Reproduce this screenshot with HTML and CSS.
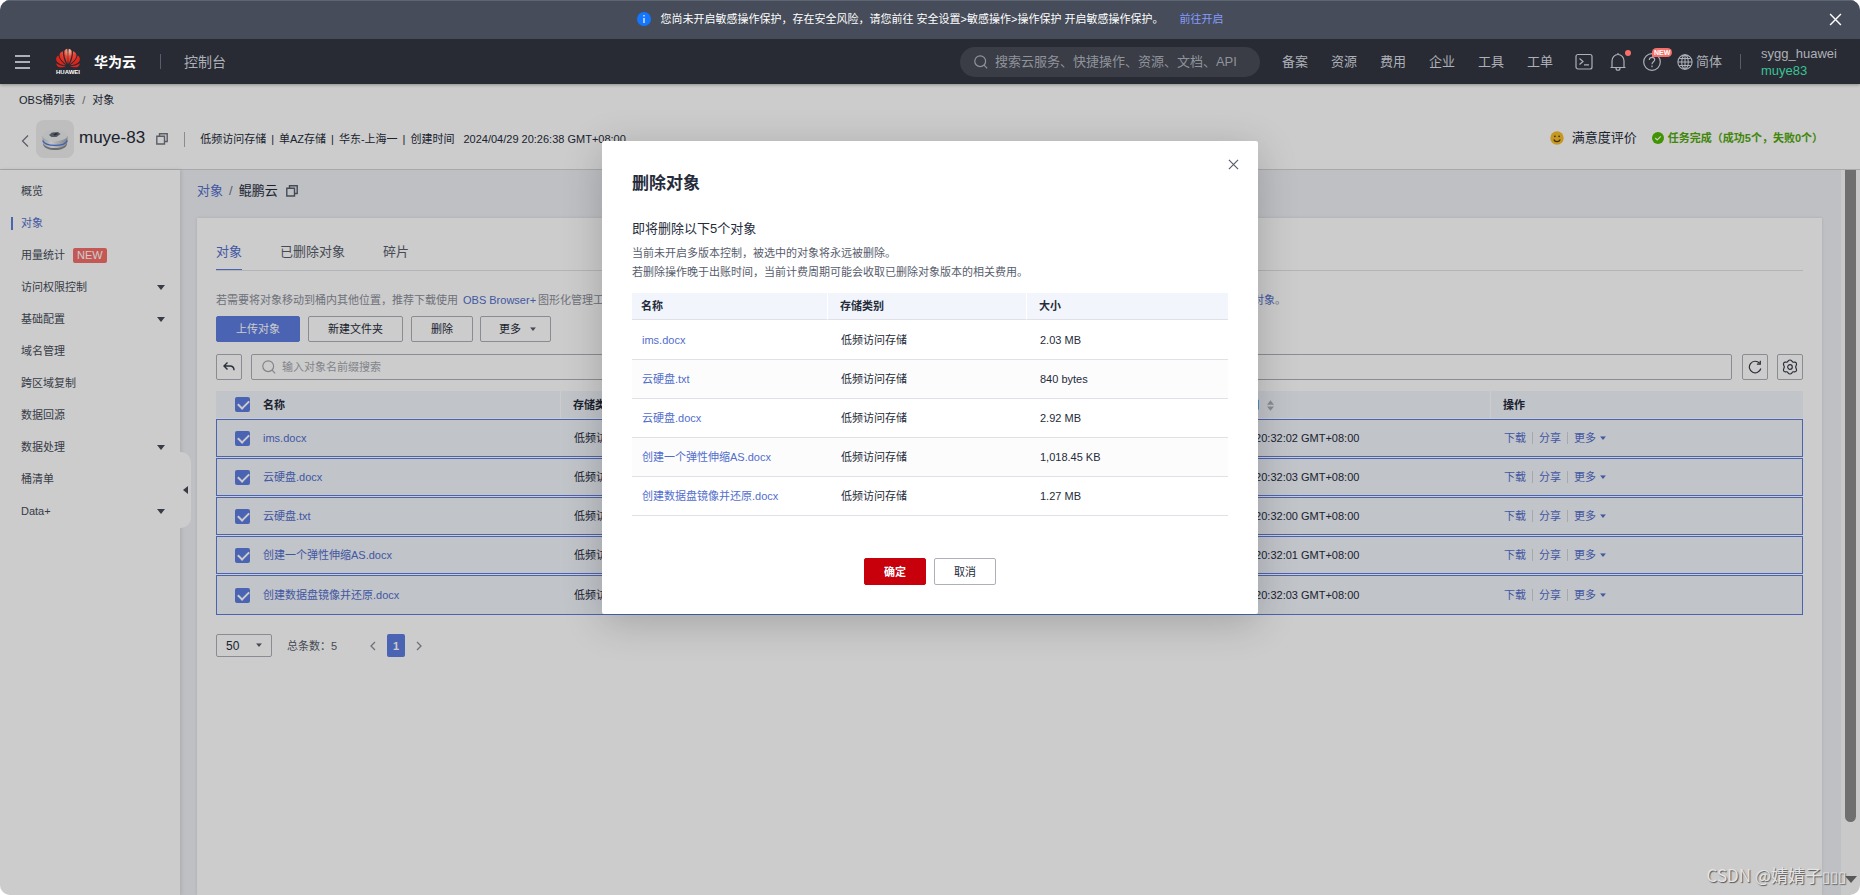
FILE: index.html
```html
<!DOCTYPE html>
<html lang="zh-CN">
<head>
<meta charset="utf-8">
<title>对象 - muye-83</title>
<link rel="stylesheet" href="styles.css">
</head>
<body>
<svg class="defs" aria-hidden="true">
  <symbol id="copy" viewBox="0 0 12 12"><path d="M3.500 3V.800h7.700v7.700H9M.800 3.300h7.700V11H.800z" fill="none" stroke="currentColor" stroke-width="1.400"/></symbol>
  <symbol id="caret" viewBox="0 0 8 5"><path d="M0 0h8L4 5z" fill="currentColor"/></symbol>
  <symbol id="cross" viewBox="0 0 12 12"><path d="M1 1l10 10M11 1L1 11" fill="none" stroke="currentColor" stroke-width="1.300"/></symbol>
  <symbol id="search" viewBox="0 0 14 14"><circle cx="6.200" cy="6.200" r="5.400" fill="none" stroke="currentColor" stroke-width="1.200"/><path d="M10 10.200l3.200 3.200" stroke="currentColor" stroke-width="1.200"/></symbol>
</svg>
<div class="app">
  <header class="top">
    <div class="notice">
      <svg class="info" viewBox="0 0 14 14"><circle cx="7" cy="7" r="7" fill="#1476ff"/><path d="M7 3v1.500M7 6v5" stroke="#fff" stroke-width="1.200"/></svg>
      <span>您尚未开启敏感操作保护，存在安全风险，请您前往 安全设置&gt;敏感操作&gt;操作保护 开启敏感操作保护。</span>
      <a href="#">前往开启</a>
      <button class="notice-close" aria-label="关闭"><svg viewBox="0 0 12 12"><use href="#cross"/></svg></button>
    </div>
    <nav class="nav">
      <button class="burger" aria-label="菜单"><i></i><i></i><i></i></button>
      <a class="brand" href="#">
        <svg class="logo" viewBox="0 0 26 27">
          <defs><radialGradient id="petal" gradientUnits="userSpaceOnUse" cx="14" cy="3" r="13"><stop offset="0" stop-color="#f9c3a6"/><stop offset=".450" stop-color="#ee4433"/><stop offset="1" stop-color="#e2231a"/></radialGradient></defs>
          <g fill="url(#petal)">
            <path d="M12.500 16C10.300 11.500 8.800 7 9.300 3.200 9.700 1.700 11 .900 12.300.800 12.800 5 12.900 11 12.500 16z"/>
            <path d="M13.500 16C15.700 11.500 17.200 7 16.700 3.200 16.300 1.700 15 .900 13.700.800 13.200 5 13.100 11 13.500 16z"/>
            <path d="M11.600 16.500C9.200 13 7.800 8.500 8 3.300 5.500 3.800 4.200 5.800 4.600 8.200 5.500 11.500 8.300 14.300 11.600 16.500z"/>
            <path d="M14.400 16.500C16.800 13 18.200 8.500 18 3.300 20.500 3.800 21.800 5.800 21.400 8.200 20.500 11.500 17.700 14.300 14.400 16.500z"/>
            <path d="M10.900 17.300C7.200 15 4.500 11.500 3.200 7.500 1 9 .500 11.600 1.900 13.500 3.800 15.900 7.500 17 10.900 17.300z"/>
            <path d="M15.100 17.300C18.800 15 21.500 11.500 22.800 7.500 25 9 25.500 11.600 24.100 13.500 22.200 15.900 18.500 17 15.100 17.300z"/>
            <path d="M10.800 18.300C7.500 18.100 3.800 17.100 1.300 15.200 1.300 17.300 2.800 19 5 19.300 7.300 19.500 9.300 19 10.800 18.300z"/>
            <path d="M15.200 18.300C18.500 18.100 22.200 17.100 24.700 15.200 24.700 17.300 23.200 19 21 19.300 18.700 19.500 16.700 19 15.200 18.300z"/>
          </g>
          <text x="13" y="26" class="logo-text" text-anchor="middle">HUAWEI</text>
        </svg>
        <b>华为云</b>
      </a>
      <span class="bar"></span>
      <a class="console" href="#">控制台</a>
      <label class="nav-search"><svg viewBox="0 0 14 14"><use href="#search"/></svg><input type="text" aria-label="搜索" placeholder="搜索云服务、快捷操作、资源、文档、API"></label>
      <div class="menu">
        <a href="#">备案</a><a href="#">资源</a><a href="#">费用</a><a href="#">企业</a><a href="#">工具</a><a href="#">工单</a>
      </div>
      <div class="tools">
        <button aria-label="终端"><svg viewBox="0 0 18 18"><rect x="1" y="1.500" width="16" height="14.500" rx="2"/><path d="M4.500 5.500l3.500 3-3.500 3M9 11.800h5"/></svg></button>
        <button aria-label="通知"><svg viewBox="0 0 18 18"><path d="M1.500 14.500h15M3 14.500V8a6 6.500 0 0 1 12 0v6.500M7 15c0 3 4 3 4 0M9 1.500V0"/></svg><span class="dot"></span></button>
        <button aria-label="帮助"><svg viewBox="0 0 18 18"><circle cx="9" cy="9" r="8.300"/><path d="M6.300 7c0-3.600 5.500-3.400 5.400-.200C11.600 8.800 9 8.800 9 11.200M9 12.600v1.600"/></svg><span class="new-pill">NEW</span></button>
        <button class="lang"><svg viewBox="0 0 18 18"><circle cx="9" cy="9" r="8"/><ellipse cx="9" cy="9" rx="3.700" ry="8"/><path d="M9 1v16M1 9h16M2.500 5h13M2.500 13h13"/></svg>简体</button>
      </div>
      <span class="bar"></span>
      <div class="user"><span>sygg_huawei</span><span class="sub">muye83</span></div>
    </nav>
  </header>

  <div class="bucket">
    <div class="crumbs"><a href="#">OBS桶列表</a><i>/</i><a href="#">对象</a></div>
    <div class="bucket-row">
      <button class="back" aria-label="返回"><svg viewBox="0 0 8 12"><path d="M7 .500L1.500 6 7 11.500"/></svg></button>
      <svg class="bucket-icon" viewBox="0 0 38 38">
        <defs><linearGradient id="side"><stop offset="0" stop-color="#c4c5c9"/><stop offset=".350" stop-color="#f4f4f6"/><stop offset="1" stop-color="#a2a4a9"/></linearGradient></defs>
        <rect width="38" height="38" rx="8" fill="#eeeeef"/>
        <path d="M7 21v3c1 8 23 8 24 0v-3z" fill="#85878d"/>
        <path d="M6.500 16v6c1 8 24 8 25 0v-6z" fill="url(#side)"/>
        <path d="M6.700 20.500c2.500 6.500 22 6.500 24.600 0" fill="none" stroke="#4a7be0" stroke-width="1.200"/>
        <ellipse cx="19" cy="15.500" rx="12.500" ry="5.800" fill="#e9eaec"/>
        <path d="M13 15l3-2.500 6-.500 2.500 2-4 3h-5z" fill="#6a707a"/><path d="M17 14.500l3-1.500 2 1-3 1.500z" fill="#333a44"/>
      </svg>
      <h1>muye-83</h1>
      <button class="copy" aria-label="复制"><svg viewBox="0 0 12 12"><use href="#copy"/></svg></button>
      <span class="split"></span>
      <p class="meta"><span>低频访问存储</span><i>|</i><span>单AZ存储</span><i>|</i><span>华东-上海一</span><i>|</i><span>创建时间</span><time>2024/04/29 20:26:38 GMT+08:00</time></p>
      <a class="rate" href="#"><svg viewBox="0 0 14 14"><circle cx="7" cy="7" r="6.700" fill="#f5bf2a"/><path d="M3.800 8.500c1 2.800 5.400 2.800 6.400 0" fill="none" stroke="#5b3a10" stroke-width="1.200"/><circle cx="4.900" cy="5.300" r=".900" fill="#5b3a10"/><circle cx="9.100" cy="5.300" r=".900" fill="#5b3a10"/></svg>满意度评价</a>
      <span class="task"><svg viewBox="0 0 12 12"><circle cx="6" cy="6" r="6" fill="#50b900"/><path d="M3.200 6l2 2 3.600-3.700" fill="none" stroke="#fff" stroke-width="1.200"/></svg>任务完成（成功5个，失败0个）</span>
    </div>
  </div>

  <div class="body">
    <aside class="side">
      <a href="#">概览</a>
      <a href="#" class="on">对象</a>
      <a href="#">用量统计<em>NEW</em></a>
      <a href="#">访问权限控制<svg viewBox="0 0 8 5"><use href="#caret"/></svg></a>
      <a href="#">基础配置<svg viewBox="0 0 8 5"><use href="#caret"/></svg></a>
      <a href="#">域名管理</a>
      <a href="#">跨区域复制</a>
      <a href="#">数据回源</a>
      <a href="#">数据处理<svg viewBox="0 0 8 5"><use href="#caret"/></svg></a>
      <a href="#">桶清单</a>
      <a href="#">Data+<svg viewBox="0 0 8 5"><use href="#caret"/></svg></a>
      <button class="fold" aria-label="收起"><svg viewBox="0 0 5 8"><path d="M5 0v8L0 4z"/></svg></button>
    </aside>
    <main class="main">
      <div class="path"><a href="#">对象</a><i>/</i><span>鲲鹏云</span><button class="copy" aria-label="复制"><svg viewBox="0 0 12 12"><use href="#copy"/></svg></button></div>
      <section class="card">
        <div class="tabs"><a href="#" class="on">对象</a><a href="#">已删除对象</a><a href="#">碎片</a></div>
        <p class="hint">若需要将对象移动到桶内其他位置，推荐下载使用<a href="#">OBS Browser+</a>图形化管理工具，支持创建文件夹、批量上传、下载、移动、复制及重命名等操作。如需了解更多使用方法和限制说明，请参见帮助中心的<a href="#">如何移动对象</a>。</p>
        <div class="actions">
          <button class="btn primary">上传对象</button>
          <button class="btn wide">新建文件夹</button>
          <button class="btn">删除</button>
          <button class="btn more">更多<svg viewBox="0 0 8 5"><use href="#caret"/></svg></button>
        </div>
        <div class="filter">
          <button class="sq" aria-label="上一级"><svg viewBox="0 0 14 14"><path d="M5.500 2.500L2 6l3.500 3.500M2 6h6c2.800 0 4 1.200 4 4.200"/></svg></button>
          <label class="find"><svg viewBox="0 0 14 14"><use href="#search"/></svg><input type="text" aria-label="搜索对象" placeholder="输入对象名前缀搜索"></label>
          <button class="sq" aria-label="刷新"><svg viewBox="0 0 14 14"><path d="M11.500 3.200A5.800 5.800 0 1 0 12.800 8.500M12.300.800v3.400H8.900" stroke-width="1.200"/></svg></button>
          <button class="sq last" aria-label="设置"><svg viewBox="0 0 16 16"><path d="M8 1c1.700 0 1.900 1.800 3 2.200 1.200.300 2.300-.800 3.300.800s-.600 2.500-.600 4 1.600 2.400.600 4-2.100.500-3.300.800C9.900 13.200 9.700 15 8 15s-1.900-1.800-3-2.200c-1.200-.300-2.300.800-3.300-.800s.600-2.500.600-4-1.600-2.400-.600-4 2.100-.500 3.300-.800C6.100 2.800 6.300 1 8 1z"/><circle cx="8" cy="8" r="2.300"/></svg></button>
        </div>
        <table class="list">
          <colgroup><col class="c-check"><col class="c-name"><col class="c-mid"><col class="c-mid"><col class="c-mid"><col></colgroup>
          <thead><tr><th><input type="checkbox" checked aria-label="全选"></th><th>名称</th><th>存储类别</th><th>大小</th><th>最后修改时间<svg class="sort" viewBox="0 0 8 12"><path d="M4 0l4 5H0zM4 12L0 7h8z"/></svg></th><th>操作</th></tr></thead>
          <tbody>
            <tr><td><input type="checkbox" checked aria-label="ims.docx"></td><td><a href="#">ims.docx</a></td><td>低频访问存储</td><td>2.03 MB</td><td>2024/04/29 20:32:02 GMT+08:00</td><td><div class="ops"><a href="#">下载</a><a href="#">分享</a><a href="#">更多<svg viewBox="0 0 8 5"><use href="#caret"/></svg></a></div></td></tr>
            <tr><td><input type="checkbox" checked aria-label="云硬盘.docx"></td><td><a href="#">云硬盘.docx</a></td><td>低频访问存储</td><td>2.92 MB</td><td>2024/04/29 20:32:03 GMT+08:00</td><td><div class="ops"><a href="#">下载</a><a href="#">分享</a><a href="#">更多<svg viewBox="0 0 8 5"><use href="#caret"/></svg></a></div></td></tr>
            <tr><td><input type="checkbox" checked aria-label="云硬盘.txt"></td><td><a href="#">云硬盘.txt</a></td><td>低频访问存储</td><td>840 bytes</td><td>2024/04/29 20:32:00 GMT+08:00</td><td><div class="ops"><a href="#">下载</a><a href="#">分享</a><a href="#">更多<svg viewBox="0 0 8 5"><use href="#caret"/></svg></a></div></td></tr>
            <tr><td><input type="checkbox" checked aria-label="创建一个弹性伸缩AS.docx"></td><td><a href="#">创建一个弹性伸缩AS.docx</a></td><td>低频访问存储</td><td>1,018.45 KB</td><td>2024/04/29 20:32:01 GMT+08:00</td><td><div class="ops"><a href="#">下载</a><a href="#">分享</a><a href="#">更多<svg viewBox="0 0 8 5"><use href="#caret"/></svg></a></div></td></tr>
            <tr><td><input type="checkbox" checked aria-label="创建数据盘镜像并还原.docx"></td><td><a href="#">创建数据盘镜像并还原.docx</a></td><td>低频访问存储</td><td>1.27 MB</td><td>2024/04/29 20:32:03 GMT+08:00</td><td><div class="ops"><a href="#">下载</a><a href="#">分享</a><a href="#">更多<svg viewBox="0 0 8 5"><use href="#caret"/></svg></a></div></td></tr>
          </tbody>
        </table>
        <div class="pager">
          <label class="size"><select aria-label="每页条数"><option>50</option></select><svg viewBox="0 0 8 5"><use href="#caret"/></svg></label>
          <span class="total">总条数：5</span>
          <button class="step" aria-label="上一页"><svg viewBox="0 0 6 10"><path d="M5 1L1 5l4 4"/></svg></button>
          <button class="page">1</button>
          <button class="step" aria-label="下一页"><svg viewBox="0 0 6 10"><path d="M1 1l4 4-4 4"/></svg></button>
        </div>
      </section>
    </main>
    <div class="scroll"><span class="thumb"></span><svg viewBox="0 0 12 7"><path d="M0 0h12L6 7z"/></svg></div>
  </div>

  <div class="mask">
    <div class="dialog" role="dialog" aria-labelledby="dlg-title">
      <button class="dialog-close" aria-label="关闭"><svg viewBox="0 0 12 12"><use href="#cross"/></svg></button>
      <h2 id="dlg-title">删除对象</h2>
      <h3>即将删除以下5个对象</h3>
      <p>当前未开启多版本控制，被选中的对象将永远被删除。<br>若删除操作晚于出账时间，当前计费周期可能会收取已删除对象版本的相关费用。</p>
      <table>
        <colgroup><col class="d-name"><col class="d-type"><col></colgroup>
        <thead><tr><th>名称</th><th>存储类别</th><th>大小</th></tr></thead>
        <tbody>
          <tr><td><a href="#">ims.docx</a></td><td>低频访问存储</td><td>2.03 MB</td></tr>
          <tr><td><a href="#">云硬盘.txt</a></td><td>低频访问存储</td><td>840 bytes</td></tr>
          <tr><td><a href="#">云硬盘.docx</a></td><td>低频访问存储</td><td>2.92 MB</td></tr>
          <tr><td><a href="#">创建一个弹性伸缩AS.docx</a></td><td>低频访问存储</td><td>1,018.45 KB</td></tr>
          <tr><td><a href="#">创建数据盘镜像并还原.docx</a></td><td>低频访问存储</td><td>1.27 MB</td></tr>
        </tbody>
      </table>
      <div class="dialog-foot"><button class="ok">确定</button><button class="cancel">取消</button></div>
    </div>
  </div>
  <div class="watermark">CSDN @婧婧子<span>▯▯▯</span></div>
</div>
</body>
</html>
```

FILE: styles.css
```css
* { box-sizing: border-box; }
body {
  margin: 0;
  background: #fff;
  color: #252b3a;
  font: 11px/16px "Liberation Sans", "Noto Sans CJK SC", sans-serif;
}
a { color: inherit; text-decoration: none; }
button, input, select { font: inherit; color: inherit; margin: 0; }
button { padding: 0; border: 0; background: none; }
h1, h2, h3, p { margin: 0; font-weight: 400; }
i, em { font-style: normal; }
svg { display: block; flex: none; }
.defs { position: absolute; width: 0; height: 0; }

.app {
  position: relative;
  display: flex;
  flex-direction: column;
  height: 100vh;
  overflow: hidden;
  border-radius: 10px;
  background: #fff;
}

/* Notice and navigation */
.top { position: relative; z-index: 20; box-shadow: 0 1px 3px rgba(0, 0, 0, .3); }
.notice {
  position: relative;
  display: flex;
  align-items: center;
  justify-content: center;
  height: 39px;
  padding-bottom: 2px;
  background: #464c59;
  border-top: 1px solid #5d6472;
  color: #fff;
}
.notice .info { width: 14px; height: 14px; margin-right: 10px; }
.notice a { color: #859bff; margin-left: 16px; }
.notice-close { position: absolute; right: 18px; top: 12px; }
.notice-close svg { width: 13px; height: 13px; }
.nav {
  display: flex;
  align-items: center;
  height: 45px;
  padding-left: 15px;
  background: #282b33;
  color: #adb0b8;
  font-size: 13px;
}
.burger { display: grid; gap: 4px; width: 15px; margin-right: 25px; }
.burger i { height: 2px; background: #adb0b8; }
.brand { display: flex; align-items: center; gap: 13px; color: #fff; font-size: 14px; }
.logo { width: 26px; height: 27px; }
.logo-text { font: bold 6px "Liberation Sans", sans-serif; fill: #fff; }
.bar { width: 1px; height: 15px; margin: 0 23px 0 24px; background: #575d6c; }
.console { font-size: 14px; }
.nav-search {
  display: flex;
  align-items: center;
  gap: 7px;
  width: 300px;
  height: 30px;
  margin-left: auto;
  padding: 0 14px;
  border-radius: 15px;
  background: #3a3d45;
  color: #8f939c;
}
.nav-search svg { width: 14px; height: 14px; }
.nav-search input, .find input { flex: 1; min-width: 0; padding: 0; border: 0; outline: 0; background: none; }
::placeholder { color: inherit; opacity: 1; }
.menu { display: flex; gap: 23px; margin: 0 22px; }
.tools { display: flex; align-items: center; }
.tools button { position: relative; margin-right: 16px; }
.tools svg { width: 18px; height: 18px; fill: none; stroke: #adb0b8; stroke-width: 1.2; }
.tools .lang { display: flex; align-items: center; gap: 3px; margin: 0 -6px 0 0; }
.tools .lang svg { width: 16px; height: 16px; }
.dot { position: absolute; right: -4px; top: -3px; width: 6px; height: 6px; border-radius: 50%; background: #f66f6a; }
.new-pill {
  position: absolute;
  left: 9px;
  top: -5px;
  padding: 0 2px;
  border-radius: 5px 5px 5px 0;
  background: #f66f6a;
  color: #fff;
  font: bold 7px/9px "Liberation Sans", sans-serif;
}
.user { display: grid; width: 99px; margin-left: -3px; line-height: 17px; }
.user .sub { color: #3ac295; }

/* Bucket header */
.bucket { padding: 8px 0 11px; border-bottom: 1px solid #d3d4d6; background: #fff; }
.crumbs { display: flex; gap: 7px; padding-left: 19px; }
.crumbs i { color: #71757f; }
.bucket-row { display: flex; align-items: center; height: 38px; margin-top: 12px; padding: 0 37px 0 21px; }
.back svg { width: 8px; height: 12px; margin: 4px 7px 0 0; fill: none; stroke: #71757f; stroke-width: 1.2; }
.bucket-icon { width: 38px; height: 38px; margin-right: 5px; }
h1 { padding-bottom: 2px; font-size: 17px; line-height: 24px; }
.copy { color: #71757f; }
.copy svg { width: 12px; height: 12px; }
h1 + .copy { margin-left: 11px; }
.split { width: 1px; height: 15px; margin: 0 15px 0 16px; background: #adb0b8; }
.meta { display: flex; gap: 5px; padding-bottom: 1px; }
.meta time { margin-left: 4px; }
.rate { display: flex; align-items: center; gap: 8px; margin-left: auto; padding-bottom: 2px; font-size: 13px; }
.rate svg { width: 14px; height: 14px; }
.task { display: flex; align-items: center; gap: 4px; margin-left: 15px; padding-bottom: 2px; color: #50a80a; font-weight: 700; }
.task svg { width: 12px; height: 12px; }

/* Side menu */
.body { display: flex; flex: 1; min-height: 0; }
.side { position: relative; z-index: 1; width: 180px; padding-top: 5px; background: #fff; color: #464c59; box-shadow: 1px 0 4px rgba(0, 0, 0, .12); }
.side a { display: flex; align-items: center; height: 32px; padding: 0 15px 0 21px; }
.side a svg { width: 8px; height: 5px; margin-left: auto; }
.side .on { padding-left: 11px; color: #526ecc; }
.side .on::before { content: ""; width: 2px; height: 13px; margin-right: 8px; background: #5e7ce0; }
.side em { margin-left: 8px; padding: 0 4px; border-radius: 2px; background: #f66f6a; color: #fff; line-height: 15px; }
.fold {
  position: absolute;
  left: 180px;
  top: 282px;
  width: 11px;
  height: 76px;
  padding-left: 3px;
  border-radius: 0 10px 10px 0;
  background: #fff;
}
.fold svg { width: 5px; height: 8px; fill: #464c59; }

/* Content */
.main { display: flex; flex: 1; flex-direction: column; min-width: 0; padding: 11px 19px 0 17px; background: #eef0f5; }
.path { display: flex; align-items: center; height: 20px; margin-bottom: 17px; font-size: 13px; }
.path a, .hint a, td a { color: #526ecc; }
.path i { margin: 0 6px; color: #71757f; }
.path .copy { margin-left: 8px; color: #575d6c; }
.card { flex: 1; padding: 24px 19px 0; background: #fff; box-shadow: 0 0 3px rgba(0, 0, 0, .1); }
.tabs { display: flex; gap: 38px; border-bottom: 1px solid #dfe1e6; font-size: 13px; line-height: 20px; color: #575d6c; }
.tabs a { padding-bottom: 7px; }
.tabs .on { color: #526ecc; border-bottom: 1px solid #5e7ce0; }
.hint { margin: 20px 0 7px; color: #8a8e99; line-height: 18px; white-space: nowrap; }
.hint a:first-child { margin: 0 2px 0 5px; }
.actions { display: flex; gap: 8px; }
.btn { height: 26px; min-width: 62px; padding: 0 19px; border: 1px solid #adb0b8; border-radius: 2px; background: #fff; }
.btn.primary { min-width: 84px; border-color: #5e7ce0; background: #5e7ce0; color: #fff; }
.btn.wide { min-width: 95px; }
.btn.more { display: flex; align-items: center; gap: 9px; min-width: 71px; margin-left: -1px; padding: 0 14px 0 18px; }
.btn.more svg { width: 6px; height: 4px; color: #575d6c; }
.filter { display: flex; margin: 12px 0 10px; }
.sq { display: grid; place-items: center; width: 26px; height: 26px; border: 1px solid #adb0b8; border-radius: 2px; }
.sq svg { width: 14px; height: 14px; fill: none; stroke: #353b49; stroke-width: 1.4; }
.sq.last { margin-left: 9px; }
.sq.last svg { width: 16px; height: 16px; stroke-width: 1.2; }
.find { display: flex; flex: 1; align-items: center; gap: 6px; margin: 0 10px 0 9px; padding: 0 10px; border: 1px solid #adb0b8; border-radius: 2px; color: #a3a6ae; }
.find svg { width: 14px; height: 14px; }

table { width: 100%; table-layout: fixed; border-spacing: 0; }
th, td { padding: 0; text-align: left; }
th { height: 27px; background: #f2f5fc; }
.list { border-spacing: 0 1px; }
.list td { height: 38px; border: solid #5e7ce0; border-width: 1px 0; background: #f2f5fc; }
.list tbody tr:last-child td { height: 40px; }
.list td:first-child { border-left-width: 1px; padding-left: 18px; }
.list td:last-child { border-right-width: 1px; }
.list th:first-child { padding-left: 19px; }
.list th:nth-child(n+3) { padding-left: 12px; border-left: 1px solid #fff; }
.list td:nth-child(n+3) { padding-left: 14px; }
.list td:nth-child(5) { padding-left: 17px; }
.c-check { width: 47px; }
.c-name { width: 297px; }
.c-mid { width: 310px; }
.list input {
  appearance: none;
  display: block;
  position: relative;
  width: 15px;
  height: 15px;
  border-radius: 2px;
  background: #5e7ce0;
}
.list input::after {
  content: "";
  position: absolute;
  left: 3px;
  top: 3px;
  width: 9px;
  height: 5px;
  border: solid #fff;
  border-width: 0 0 2px 2px;
  transform: rotate(-45deg);
}
.sort { display: inline-block; width: 7px; height: 11px; margin-left: 8px; fill: #adb0b8; vertical-align: -2px; }
.ops { display: flex; line-height: 12px; }
.ops a + a { margin-left: 6px; padding-left: 6px; border-left: 1px solid #d1d3d9; }
.ops a:last-child { display: flex; align-items: center; gap: 4px; }
.ops svg { width: 6px; height: 4px; }

.pager { display: flex; align-items: center; margin-top: 18px; color: #575d6c; }
.size { position: relative; margin-right: 15px; }
.size select { appearance: none; display: block; width: 56px; height: 23px; padding: 0 9px; border: 1px solid #adb0b8; border-radius: 2px; background: #fff; color: #252b3a; font-size: 12px; }
.size svg { position: absolute; right: 10px; top: 9px; width: 6px; height: 4px; }
.total { margin-right: 33px; }
.step svg { width: 6px; height: 10px; fill: none; stroke: #8a8e99; stroke-width: 1.3; }
.page { width: 18px; height: 23px; margin: 0 11px; border-radius: 2px; background: #5e7ce0; color: #fff; font-weight: 700; }

.scroll { display: flex; flex-direction: column; align-items: center; width: 19px; padding: 0 0 12px; background: #fcfcfc; }
.thumb { flex: 1; width: 11px; margin-bottom: 54px; border-radius: 0 0 6px 6px; background: #8b8b8b; }
.scroll svg { width: 12px; height: 7px; fill: #6e6e6e; }

/* Dialog */
.mask { position: absolute; inset: 0; z-index: 10; padding-top: 141px; background: rgba(0, 0, 0, .2); }
.dialog { position: relative; width: 656px; margin: 0 auto; padding: 31px 30px 29px; border-radius: 2px; background: #fff; box-shadow: 0 8px 40px rgba(0, 0, 0, .2); }
.dialog-close { position: absolute; right: 19px; top: 18px; color: #575d6c; }
.dialog-close svg { width: 11px; height: 11px; }
h2 { font-size: 17px; line-height: 24px; font-weight: 700; }
h3 { margin: 23px 0 5px; font-size: 13px; line-height: 20px; }
.dialog p { line-height: 19px; color: #575d6c; }
.dialog table { margin-top: 11px; }
.dialog th { padding-left: 9px; border-bottom: 1px solid #dfe1e6; }
.dialog th + th { padding-left: 12px; border-left: 1px solid #fff; }
.dialog td { height: 39px; padding-left: 10px; border-bottom: 1px solid #dfe1e6; }
.dialog td + td { padding-left: 14px; }
.dialog tbody tr:first-child td { height: 40px; }
.dialog tr:nth-child(even) td { background: #fcfcfc; }
.d-name { width: 195px; }
.d-type { width: 199px; }
.dialog-foot { display: flex; justify-content: center; gap: 8px; margin-top: 42px; }
.dialog-foot button { width: 62px; height: 27px; border: 1px solid #adb0b8; border-radius: 2px; }
.dialog-foot .ok { border-color: #c7000b; background: #c7000b; color: #fff; font-weight: 700; }

.watermark {
  position: absolute;
  right: 14px;
  bottom: 8px;
  z-index: 30;
  color: #e4e4e4;
  font: 17px/22px "Noto Sans CJK SC", sans-serif;
  text-shadow: 1px 1px 1px #555;
}
.watermark span { font-size: 15px; }
```
